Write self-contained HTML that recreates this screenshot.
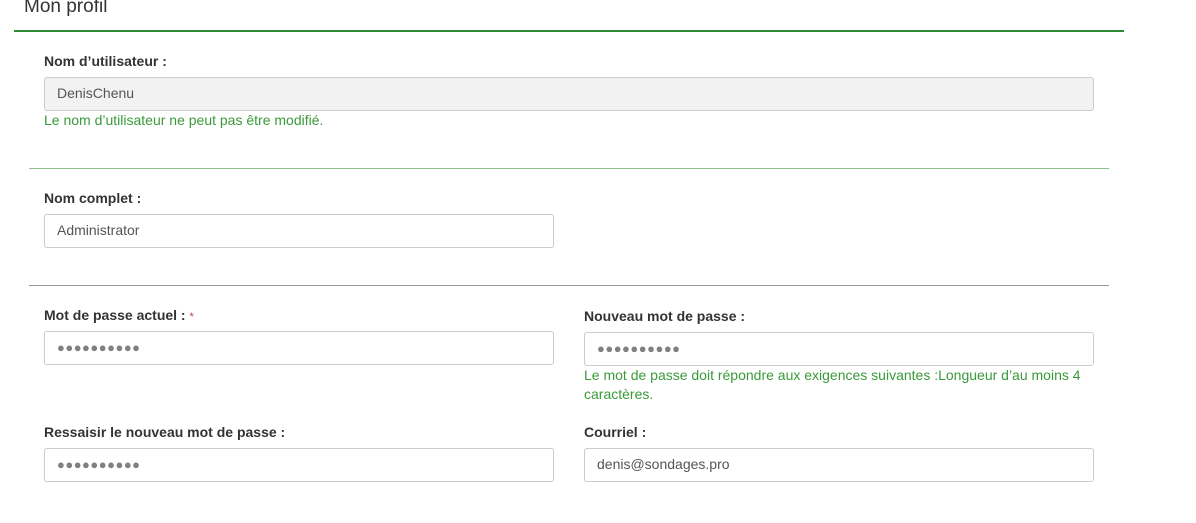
<!DOCTYPE html>
<html><head><meta charset="utf-8"><style>
body{margin:0;width:1196px;height:523px;background:#fff;font-family:"Liberation Sans",sans-serif;position:relative;overflow:hidden;color:#333}
div,span{position:absolute}
.t{font-size:19px;color:#333;left:24px;top:-4px}
.l{font-size:14px;font-weight:bold;color:#333}
.in{border:1px solid #ccc;border-radius:3px;height:32px;box-sizing:border-box;font-size:14px;color:#555;padding:7px 12px;line-height:16px;background:#fff}
.h{font-size:14px;color:#3a9a3a;line-height:19px}
.hr{height:1px}
.dots{font-size:13px;letter-spacing:0.5px;color:#808080}
</style></head><body>
<div class="t">Mon profil</div>
<div class="hr" style="left:14px;top:30px;width:1110px;height:2px;background:#2e8b34"></div>
<div class="l" style="left:44px;top:53px">Nom d’utilisateur :</div>
<div class="in" style="left:44px;top:77px;width:1050px;height:34px;background:#f2f2f2">DenisChenu</div>
<div class="h" style="left:44px;top:111px">Le nom d’utilisateur ne peut pas être modifié.</div>
<div class="hr" style="left:29px;top:168px;width:1080px;background:#8cbf8c"></div>
<div class="l" style="left:44px;top:190px">Nom complet :</div>
<div class="in" style="left:44px;top:214px;width:510px;height:34px">Administrator</div>
<div class="hr" style="left:29px;top:285px;width:1080px;background:#999"></div>
<div class="l" style="left:44px;top:307px">Mot de passe actuel : <span style="position:static;color:#c33;font-size:11px;font-weight:normal">*</span></div>
<div class="in dots" style="left:44px;top:331px;width:510px;height:34px;padding-top:8px">●●●●●●●●●●</div>
<div class="l" style="left:584px;top:308px">Nouveau mot de passe :</div>
<div class="in dots" style="left:584px;top:332px;width:510px;height:34px;padding-top:8px">●●●●●●●●●●</div>
<div class="h" style="left:584px;top:366px;width:520px">Le mot de passe doit répondre aux exigences suivantes :Longueur d’au moins 4 caractères.</div>
<div class="l" style="left:44px;top:424px">Ressaisir le nouveau mot de passe :</div>
<div class="in dots" style="left:44px;top:448px;width:510px;height:34px;padding-top:8px">●●●●●●●●●●</div>
<div class="l" style="left:584px;top:424px">Courriel :</div>
<div class="in" style="left:584px;top:448px;width:510px;height:34px">denis@sondages.pro</div>
</body></html>
